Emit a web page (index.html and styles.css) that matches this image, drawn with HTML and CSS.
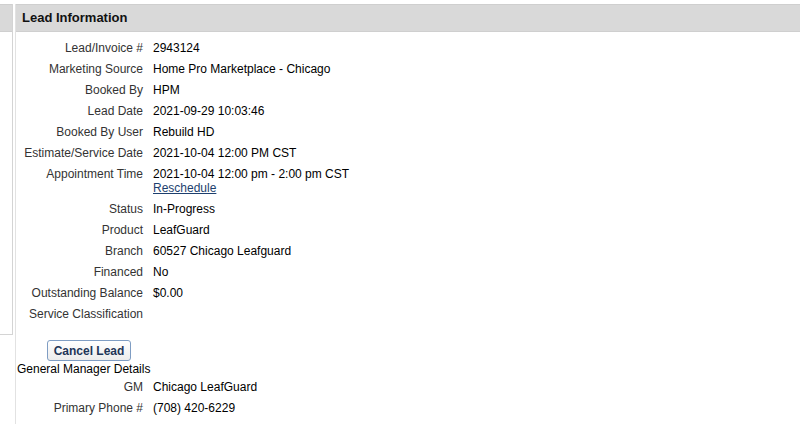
FILE: index.html
```html
<!DOCTYPE html>
<html lang="en">
  <head>
    <meta charset="UTF-8" />
    <title>Lead Information</title>
    <link rel="stylesheet" href="styles.css">
  </head>
  <body>
    <div class="page">
      <div class="side">
        <div class="side-head"></div>
      </div>
      <div class="panel">
        <div class="panel-head">Lead Information</div>
        <table class="info">
          <tr><td class="label">Lead/Invoice #</td><td>2943124</td></tr>
          <tr><td class="label">Marketing Source</td><td>Home Pro Marketplace - Chicago</td></tr>
          <tr><td class="label">Booked By</td><td>HPM</td></tr>
          <tr><td class="label">Lead Date</td><td>2021-09-29 10:03:46</td></tr>
          <tr><td class="label">Booked By User</td><td>Rebuild HD</td></tr>
          <tr><td class="label">Estimate/Service Date</td><td>2021-10-04 12:00 PM CST</td></tr>
          <tr>
            <td class="label">Appointment Time</td>
            <td>2021-10-04 12:00 pm - 2:00 pm CST<a href="#" class="resched">Reschedule</a></td>
          </tr>
          <tr><td class="label">Status</td><td>In-Progress</td></tr>
          <tr><td class="label">Product</td><td>LeafGuard</td></tr>
          <tr><td class="label">Branch</td><td>60527 Chicago Leafguard</td></tr>
          <tr><td class="label">Financed</td><td>No</td></tr>
          <tr><td class="label">Outstanding Balance</td><td>$0.00</td></tr>
          <tr><td class="label">Service Classification</td><td></td></tr>
        </table>
        <div class="actions">
          <button class="btn">Cancel Lead</button>
        </div>
        <div class="section-title">General Manager Details</div>
        <table class="info">
          <tr><td class="label">GM</td><td>Chicago LeafGuard</td></tr>
          <tr><td class="label">Primary Phone #</td><td>(708) 420-6229</td></tr>
          <tr><td class="label">Email</td><td>chi@leafguard.com</td></tr>
        </table>
      </div>
    </div>
  </body>
</html>
```

FILE: styles.css
```css
body {
  margin: 0;
  font-family: "Liberation Sans", Arial, sans-serif;
  font-size: 12px;
  color: #000;
  background-color: #fff;
}

.page {
  display: flex;
  align-items: flex-start;
  padding-top: 4px;
}

.side {
  width: 12px;
  height: 330px;
  border-right: 1px solid #d4d4d4;
  border-bottom: 1px solid #d4d4d4;
  flex-shrink: 0;
}

.side-head {
  height: 26px;
  background-color: #d9d9d9;
  border-top: 1px solid #cfcfcf;
  border-bottom: 1px solid #cfcfcf;
}

.panel {
  flex: 1;
  margin-left: 2px;
  border-left: 1px solid #e2e2e2;
  min-height: 430px;
}

.panel-head {
  height: 26px;
  line-height: 26px;
  padding-left: 6px;
  background-color: #d9d9d9;
  border-top: 1px solid #cfcfcf;
  border-bottom: 1px solid #cfcfcf;
  font-size: 13px;
  font-weight: bold;
  color: #111;
}

.info {
  border-collapse: collapse;
  margin-top: 6px;
}

.info td {
  padding: 4px 5px;
  line-height: 13px;
  vertical-align: top;
  white-space: nowrap;
}

.info td.label {
  width: 122px;
  text-align: right;
  color: #333;
}

.resched {
  display: block;
  line-height: 14px;
  color: #1d3f6e;
  text-decoration: underline;
}

.actions {
  padding: 15px 0 0 31px;
}

.btn {
  width: 84px;
  height: 21px;
  padding: 0;
  font-family: "Liberation Sans", Arial, sans-serif;
  font-size: 12px;
  font-weight: bold;
  color: #1e3658;
  background: linear-gradient(#ffffff, #ececec);
  border: 1px solid #7f9dc3;
  border-radius: 3px;
}

.section-title {
  margin-top: 2px;
  padding-left: 1px;
  line-height: 13px;
}

.section-title + .info {
  margin-top: 1px;
}
```
